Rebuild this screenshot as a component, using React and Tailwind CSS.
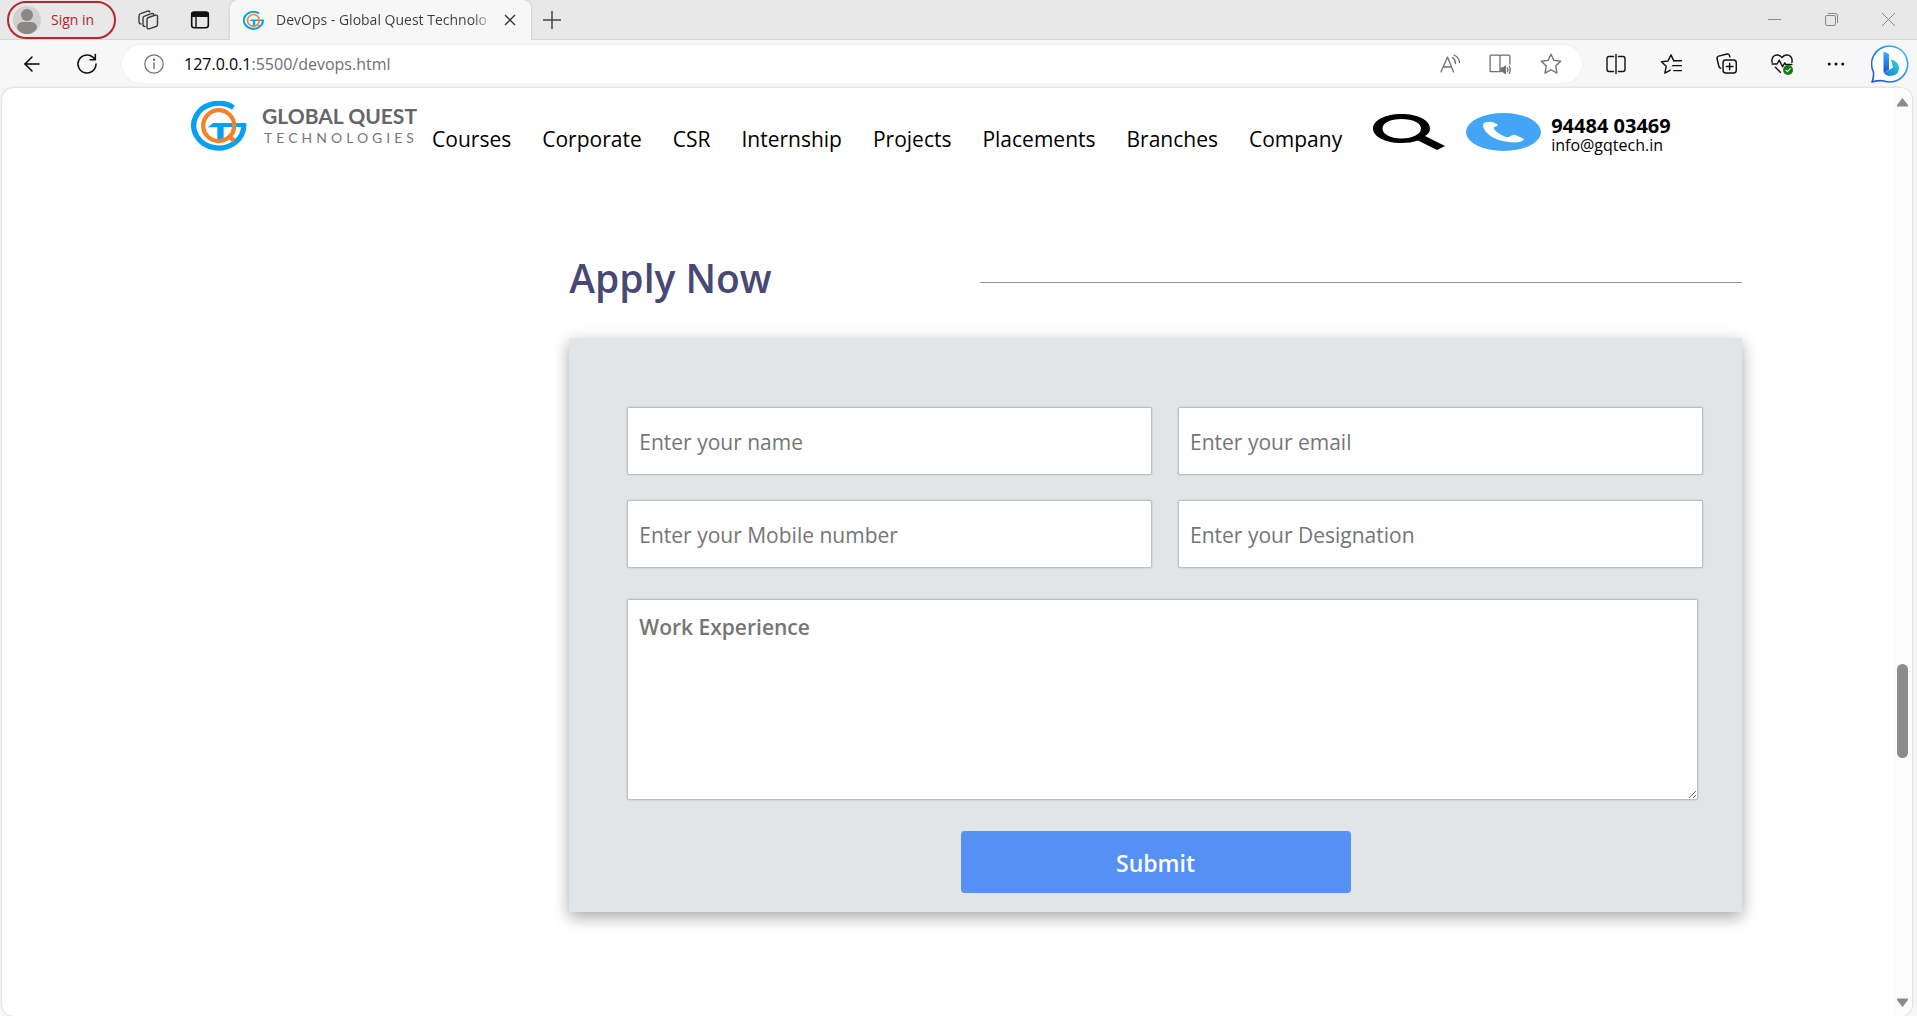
import { ArrowLeft } from 'lucide-react';

const navLinks = ['Courses', 'Corporate', 'CSR', 'Internship', 'Projects', 'Placements', 'Branches', 'Company'];

function QuestMark({ className }) {
  return (
    <svg viewBox="0 0 168 152" className={className} fill="none" aria-hidden="true">
      <path d="M128 20A76 68 0 1 0 159 72" stroke="#089ff0" strokeWidth="16" />
      <path d="M50 80l16-13h101v12H98v40H79V80z" fill="#089ff0" />
      <circle cx="83" cy="75" r="47" stroke="#f58229" strokeWidth="13" />
      <path d="M112 105l18 16" stroke="#f58229" strokeWidth="14" />
    </svg>
  );
}

function TabStrip() {
  return (
    <div className="flex h-10 items-stretch border-b border-[#d6d6d6] bg-[#e8e8e8]">
      <button className="ml-[7px] mt-px flex h-[38px] w-[109px] shrink-0 items-center rounded-full border-2 border-[#b3272d] pl-1 text-sm text-[#b3272d]">
        <svg viewBox="0 0 28 28" className="mr-2.5 h-7 w-7" aria-hidden="true">
          <circle cx="14" cy="14" r="14" fill="#d2d0ce" />
          <circle cx="14" cy="9" r="6" fill="#8a8886" />
          <path d="M4 22c0-4 3-6 6-6h8c3 0 6 2 6 6c-2 4-6 6-10 6s-8-2-10-6z" fill="#8a8886" />
        </svg>
        Sign in
      </button>
      <button aria-label="Workspaces" className="ml-[21px] shrink-0">
        <svg viewBox="0 0 22 22" className="h-[22px] w-[22px]" fill="none" stroke="#3b3b3b" strokeWidth="1.4" strokeLinejoin="round" strokeLinecap="round" aria-hidden="true">
          <path d="M10 10.500q0-1.500 1.500-2l7-2.300q2-.5 2 1.300v8q0 1.500-1.500 2l-7 2.300q-2 .5-2-1.300z" />
          <path d="M8 17.500q-2 0-2-1.800V9.500q0-1.800 1.600-2.300l7-2.600q1.600-.5 2.200.8" />
          <path d="M4 15q-2-.2-2-2V7q0-1.800 1.600-2.300l7-2.600q1.600-.5 2.200.8" />
        </svg>
      </button>
      <button aria-label="Tab actions" className="ml-[31px] shrink-0">
        <svg viewBox="0 0 20 20" className="h-5 w-5" fill="none" aria-hidden="true">
          <rect x="1.700" y="2.200" width="16.600" height="15.600" rx="2.500" stroke="#111" strokeWidth="1.600" />
          <path d="M1 7V4q0-2.500 2.500-2.500h13Q19 1.500 19 4v3z" fill="#111" />
          <path d="M6 7v11" stroke="#111" strokeWidth="1.400" />
        </svg>
      </button>
      <div className="ml-5 flex h-10 w-[301px] shrink-0 items-center rounded-t-lg bg-[#f7f7f7] pl-[13px] shadow-[0_0_3px_rgba(0,0,0,0.2)] [clip-path:inset(0_-4px_0_-4px)]">
        <QuestMark className="h-[19px] w-[21px]" />
        <span className="ml-3 w-[218px] overflow-hidden whitespace-nowrap bg-gradient-to-r from-[#3b3b3b] from-90% to-transparent bg-clip-text text-sm text-transparent">
          DevOps - Global Quest Technolo
        </span>
        <button aria-label="Close tab" className="ml-2.5">
          <svg viewBox="0 0 12 12" className="h-3 w-3" stroke="#3b3b3b" strokeWidth="1.500" aria-hidden="true"><path d="M1 1l10 10M11 1L1 11" /></svg>
        </button>
      </div>
      <button aria-label="New tab" className="ml-3 shrink-0">
        <svg viewBox="0 0 18 18" className="h-[18px] w-[18px]" stroke="#444" strokeWidth="1.500" aria-hidden="true"><path d="M9 0v18M0 9h18" /></svg>
      </button>
      <div className="ml-auto flex items-center gap-11 pr-[22px] text-[#8a8a8a]">
        <button aria-label="Minimize">
          <svg viewBox="0 0 13 13" className="h-[13px] w-[13px]" stroke="currentColor" aria-hidden="true"><path d="M0 6.500h13" /></svg>
        </button>
        <button aria-label="Restore">
          <svg viewBox="0 0 13 13" className="h-[13px] w-[13px]" fill="none" stroke="currentColor" aria-hidden="true">
            <rect x="0.500" y="2.500" width="10" height="10" rx="1.500" /><path d="M3 .5h7q2.500 0 2.500 2.500v7" />
          </svg>
        </button>
        <button aria-label="Close">
          <svg viewBox="0 0 13 13" className="h-[13px] w-[13px]" stroke="currentColor" aria-hidden="true"><path d="M0 0l13 13M13 0L0 13" /></svg>
        </button>
      </div>
    </div>
  );
}

const star = 'M10 1.200l2.600 5.500 6.200.8-4.500 4.300 1.100 6.500L10 15.200l-5.400 3.100 1.100-6.500L1.200 7.500l6.200-.8z';

function Icon({ label, children, className = 'h-5 w-5' }) {
  return (
    <button aria-label={label} className="shrink-0">
      <svg viewBox="0 0 20 20" className={className} fill="none" stroke="currentColor" strokeWidth="1.400" strokeLinejoin="round" strokeLinecap="round" aria-hidden="true">
        {children}
      </svg>
    </button>
  );
}

function Toolbar() {
  return (
    <div className="flex h-12 items-center bg-[#f7f7f7] pb-px">
      <button aria-label="Back" className="ml-5"><ArrowLeft className="h-6 w-6" strokeWidth={1.500} /></button>
      <button aria-label="Refresh" className="ml-8">
        <svg viewBox="0 0 22 22" className="h-[22px] w-[22px]" fill="none" stroke="#111" strokeWidth="1.600" strokeLinecap="round" aria-hidden="true">
          <path d="M20 11a9 9 0 1 1-3.200-6.900L19 6.300M19.300 1.500v5.200h-5.200" />
        </svg>
      </button>
      <div className="ml-6 flex h-[38px] flex-1 items-center rounded-full bg-white pl-[22px] pr-5 text-[#6f6f6f] shadow-[0_0_3px_rgba(0,0,0,0.06)]">
        <Icon label="Site information">
          <circle cx="10" cy="10" r="9.200" strokeWidth="1.200" /><path d="M10 9v5.500" /><circle cx="10" cy="5.800" r=".5" fill="currentColor" />
        </Icon>
        <p className="ml-5 flex-1 text-base"><span className="text-black">127.0.0.1</span>:5500/devops.html</p>
        <div className="flex items-center gap-[29px]">
          <Icon label="Read aloud">
            <path d="M1 18L7.500 3l6 15M3 13h8.500M12.500 3.500q3 2 3 6M14 1q5 2 5.500 7.500" strokeWidth="1.300" />
          </Icon>
          <Icon label="Immersive reader" className="h-[22px] w-[22px]">
            <path d="M10 3v14H2q-1 0-1-1V3q0-1 1-1h7q1 0 1 1q0-1 1-1h7q1 0 1 1v7" strokeWidth="1.200" />
            <path d="M11 13.500h1.500l2.500-2v7.500l-2.500-2H11z" fill="currentColor" strokeWidth=".8" />
            <path d="M16.700 13.500q1 1.800 0 3.600M18.500 12q1.600 3.300 0 6.500" strokeWidth="1.200" />
          </Icon>
          <Icon label="Add to favourites" className="h-[22px] w-[22px]"><path d={star} strokeWidth="1.200" /></Icon>
        </div>
      </div>
      <div className="flex items-center gap-[34px] pl-6 pr-[26px] text-[#111]">
        <Icon label="Split screen"><path d="M7.500 2.500H3Q1 2.500 1 4.500v11q0 2 2 2h4.500M10 0v20M12.500 2.500H17q2 0 2 2v11q0 2-2 2h-4.500" /></Icon>
        <Icon label="Favourites" className="h-[22px] w-[22px]">
          <path d="M12.500 7.200L10 1.700 7.300 7.200l-6 .8 4.300 4.100-1.200 6.200 5-2.700M13 7h6.500M11.500 11.500h8M12.500 16h7" strokeWidth="1.300" />
        </Icon>
        <Icon label="Collections" className="h-[21px] w-[21px]">
          <rect x="6.700" y="6.700" width="12.600" height="12.300" rx="2.500" /><path d="M13 9.700v6.300M9.800 12.900h6.400M4.500 14.500q-1.300-.2-1.700-1.700L1 5.500Q.6 3.500 2.500 3l8-2q1.800-.3 2.400 1.500l.3 1.200" />
        </Icon>
        <Icon label="Browser essentials" className="h-[22px] w-[22px]">
          <path d="M1 8.500C0 4 3 1.500 6 1.800Q8.500 2 10 4.200Q11.500 2 14 1.800C17 1.500 20 4 19 8.500M1 10h4.500l2-3.500 3 6 2-3.500 1 1.500h5.500M4 13l4.500 4.500" strokeWidth="1.300" />
          <circle cx="15.500" cy="15.500" r="4.500" fill="#107c10" stroke="none" /><path d="M13.600 15.700l1.400 1.300 2.500-2.800" stroke="#fff" strokeWidth="1" />
        </Icon>
        <Icon label="More" className="h-[18px] w-[18px]"><g fill="currentColor" stroke="none"><circle cx="2.500" cy="10" r="1.700" /><circle cx="10" cy="10" r="1.700" /><circle cx="17.500" cy="10" r="1.700" /></g></Icon>
      </div>
      <button aria-label="Bing chat" className="mr-2 shrink-0">
        <svg viewBox="0 0 38 38" className="h-[38px] w-[38px]" aria-hidden="true">
          <defs>
            <linearGradient id="ring" x1="0" y1="1" x2="1" y2="0"><stop stopColor="#1f4fd8" /><stop offset=".55" stopColor="#2490e8" /><stop offset="1" stopColor="#35c5f0" /></linearGradient>
            <linearGradient id="stem" x1="0" y1="0" x2="0" y2="1"><stop stopColor="#37b4ff" /><stop offset="1" stopColor="#1752d8" /></linearGradient>
            <linearGradient id="bowl" x1="0" y1="1" x2="1" y2="0"><stop stopColor="#1a6ff0" /><stop offset="1" stopColor="#33dccb" /></linearGradient>
          </defs>
          <path d="M1 37Q3 33 2.500 27A18 18 0 1 1 19 37Q16 37 13 36Q8 35 1 37z" fill="#fff" stroke="url(#ring)" strokeWidth="1.600" strokeLinejoin="round" />
          <path d="M20 14.500q8 2 8 8.500q0 8-10 8q-3 0-5-3l9-5.500z" fill="url(#bowl)" />
          <path d="M12.500 6.500L18 9v15.500L13 28q-.5-1-.5-3z" fill="url(#stem)" />
        </svg>
      </button>
    </div>
  );
}

function SiteHeader() {
  return (
    <header className="flex h-[90px] items-start pl-[10%]">
      <a href="#home" className="flex shrink-0 pt-[13px] font-[Lato,sans-serif] text-[#666]" aria-label="Global Quest Technologies">
        <QuestMark className="h-[50px] w-14" />
        <span className="ml-[15px] block w-[156px] whitespace-nowrap pt-[3px]">
          <span className="block text-[21px] font-bold leading-6">GLOBAL QUEST</span>
          <span className="block pl-0.5 pt-0.5 text-sm leading-4 tracking-[4px] text-[#777]">TECHNOLOGIES</span>
        </span>
      </a>
      <nav className="ml-3.5 flex shrink-0 gap-[31px] pt-9 text-[21px] leading-[30px] text-black">
        {navLinks.map((name) => <a key={name} href={`#${name.toLowerCase()}`}>{name}</a>)}
      </nav>
      <button aria-label="Search" className="ml-[31px] mt-[26px] shrink-0">
        <svg viewBox="0 0 72 36" className="h-9 w-[72px]" aria-hidden="true">
          <path fillRule="evenodd" d="M28.500 0C44 0 57 6 57 14.500Q57 19 52 22L72 32L64 36L45 26.500Q38 29 28.500 29C13 29 0 23 0 14.500S13 0 28.500 0zM28.500 5C17 5 9.500 9 9.500 14.500S17 24.500 28.500 24.500S48 20 48 14.500S40 5 28.500 5z" />
        </svg>
      </button>
      <svg viewBox="0 0 225 114" className="ml-[21px] mt-[25px] h-[38px] w-[75px] shrink-0" aria-hidden="true">
        <ellipse cx="112.500" cy="57" rx="112.500" ry="57" fill="#42a5f5" />
        <path d="M66 27C55 27 50 32 51 39C56 62 88 87 143 88Q158 89 168 84Q176 80 173 77L148 66Q143 64 138 67L129 72Q124 74 118 71C103 65 90 57 84 48Q82 44 86 42L93 39Q97 37 94 34L81 28Q74 25 66 27z" fill="#fff" />
      </svg>
      <address className="ml-2.5 shrink-0 pt-[26px] not-italic text-black">
        <a href="tel:9448403469" className="block text-xl font-bold leading-6">94484 03469</a>
        <a href="mailto:info@gqtech.in" className="block text-base leading-[14px]">info@gqtech.in</a>
      </address>
    </header>
  );
}

const control = 'block w-full rounded-xs border border-[#bdc0c2] bg-white px-[11px] text-[21px] leading-7 text-black shadow-[0_0_2px_rgba(0,0,0,0.2)] placeholder:text-[#757575]';

function Field({ label, type = 'text' }) {
  return <input type={type} aria-label={label} placeholder={label} className={`${control} h-[68px] pt-0.5`} />;
}

function ApplySection() {
  return (
    <section className="ml-[30%] mr-[8%] pt-[70px]">
      <div className="flex items-center">
        <h2 className="w-[35%] text-[39px] font-semibold leading-[60px] text-[#484874]">Apply Now</h2>
        <hr className="mt-2 flex-1 border-[#999]" />
      </div>
      <form className="mt-[30px] bg-[#e1e5e8] pb-[19px] pt-[69px] shadow-[0_5px_15px_rgba(0,0,0,0.35)]">
        <div className="ml-[58px] mr-[39px] grid grid-cols-2 gap-x-[26px] gap-y-[25px]">
          <Field label="Enter your name" />
          <Field label="Enter your email" type="email" />
          <Field label="Enter your Mobile number" type="tel" />
          <Field label="Enter your Designation" />
        </div>
        <div className="ml-[58px] mr-11 mt-[31px]">
          <textarea aria-label="Work Experience" placeholder="Work Experience" className={`${control} h-[201px] resize pt-[13px] font-semibold`} />
        </div>
        <button type="submit" className="mx-auto mt-[31px] block h-[62px] w-[390px] rounded-sm bg-[#5590f5] pt-0.5 text-[23px] font-semibold text-white">Submit</button>
      </form>
    </section>
  );
}

export default function App() {
  return (
    <div className="flex h-screen flex-col overflow-hidden bg-[#f7f7f7] font-['Open_Sans',sans-serif]">
      <TabStrip />
      <Toolbar />
      <div className="ml-0.5 mr-[5px] flex min-h-0 flex-1 overflow-hidden rounded-xl bg-white shadow-[0_0_3px_rgba(0,0,0,0.2)]">
        <main className="min-w-0 flex-1 overflow-hidden">
          <SiteHeader />
          <ApplySection />
        </main>
        <div className="flex w-[19px] flex-col items-center bg-[#fcfcfc] pb-[9px] pt-2.5 text-[#8b8b8b]">
          <svg viewBox="0 0 11 9" className="h-[9px] w-[11px]" fill="currentColor" aria-hidden="true"><path d="M5.500 0L11 7v1.500H0V7z" /></svg>
          <div className="flex-[557]" />
          <div className="w-[11px] flex-[94] rounded-full bg-[#8b8b8b]" />
          <div className="flex-[240]" />
          <svg viewBox="0 0 11 9" className="h-[9px] w-[11px]" fill="currentColor" aria-hidden="true"><path d="M5.500 9L11 2V.5H0V2z" /></svg>
        </div>
      </div>
    </div>
  );
}
